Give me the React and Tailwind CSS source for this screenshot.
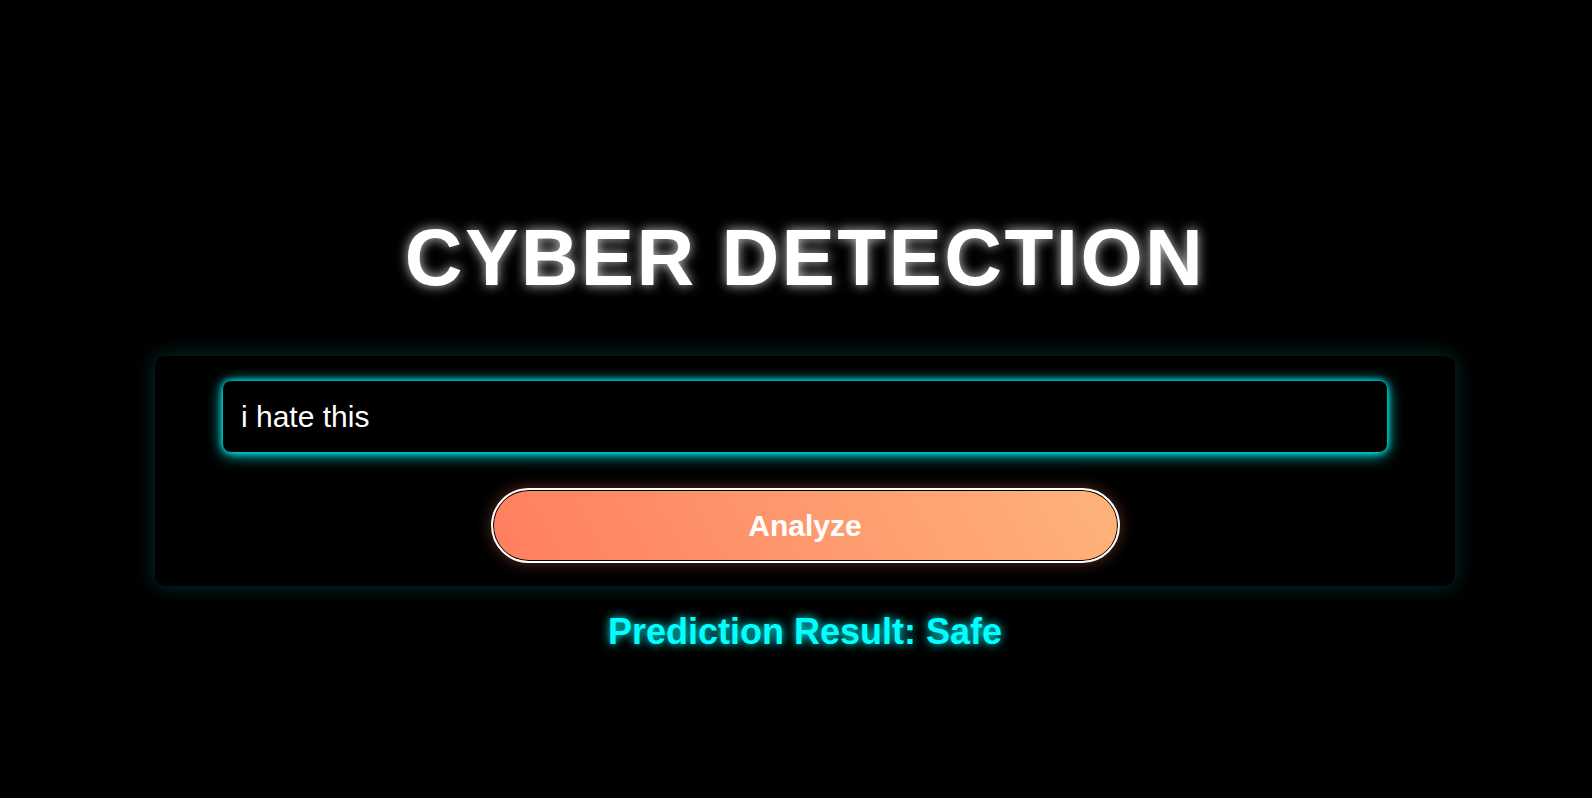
import React, { useState } from "react";

const App = () => {
  const [text, setText] = useState("i hate this");
  const [result] = useState("Safe");

  return (
    <div
      className="min-h-screen w-full bg-black flex flex-col items-center pl-[18px] pt-[213px]"
      style={{ fontFamily: '"Liberation Sans", Arial, sans-serif' }}
    >
      {/* Title */}
      <h1 className="text-[80px] leading-[90px] font-bold text-white tracking-[2.4px] [text-shadow:0_0_12px_rgba(255,255,255,0.8)]">
        CYBER DETECTION
      </h1>

      {/* Input card */}
      <div className="mt-[53px] w-[1300px] rounded-[10px] bg-black px-[68px] pt-[25px] pb-[23px] flex flex-col items-center shadow-[0_0_20px_rgba(0,255,255,0.2)]">
        <input
          type="text"
          value={text}
          onChange={(e) => setText(e.target.value)}
          className="w-full h-[71px] rounded-[8px] bg-black px-[18px] text-[30px] text-white outline-none shadow-[0_0_6px_#00ffff,0_2px_15px_#00ffff]"
          style={{ fontFamily: '"Liberation Sans", Arial, sans-serif' }}
        />
        <button
          className="mt-[36px] w-[629px] h-[75px] rounded-full border-2 border-white bg-[linear-gradient(60deg,#ff7e5f,#feb47b)] text-[30px] font-bold text-white shadow-[inset_0_0_0_1px_#000,0_0_15px_rgba(255,126,95,0.35)]"
          style={{ fontFamily: '"Liberation Sans", Arial, sans-serif' }}
        >
          Analyze
        </button>
      </div>

      {/* Result */}
      <p className="mt-[19px] text-[36px] font-bold text-[#00ffff] [text-shadow:0_0_10px_#00ffff]">
        Prediction Result: {result}
      </p>
    </div>
  );
};

export default App;
